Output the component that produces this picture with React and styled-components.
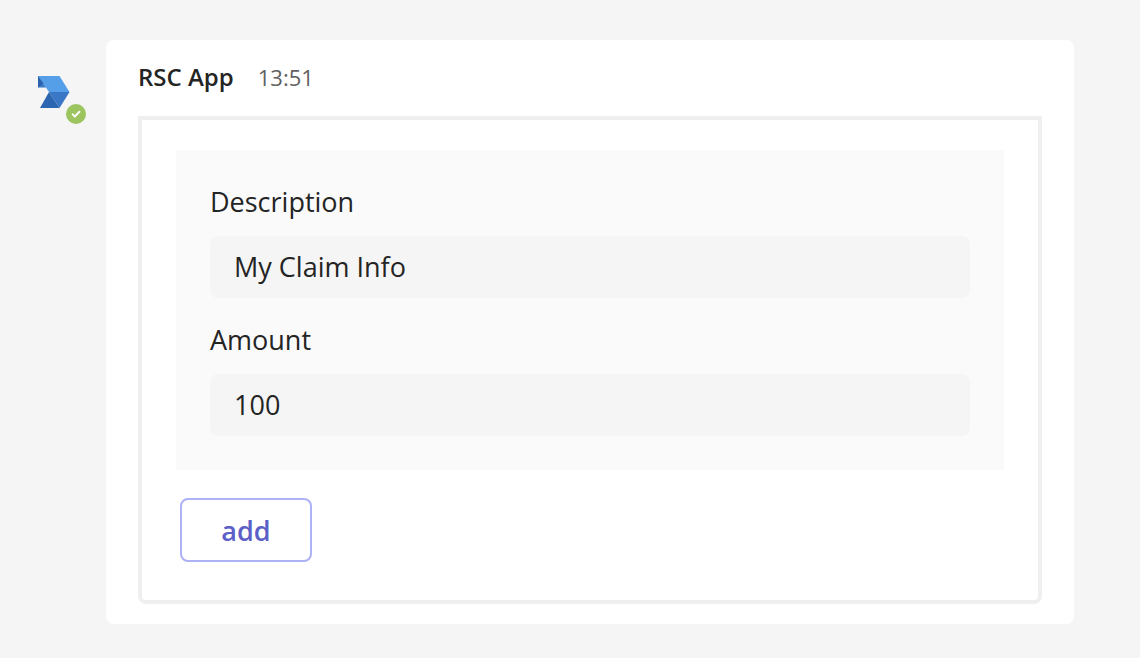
import React from "react";
import styled, { createGlobalStyle } from "styled-components";

const GlobalStyle = createGlobalStyle`
  *, *::before, *::after { box-sizing: border-box; }
  body {
    margin: 0;
    background: #f5f5f5;
    color: #242424;
    font-family: "Segoe UI", "Open Sans", "Noto Sans", sans-serif;
  }
  input, button { font: inherit; color: inherit; }
`;

const Message = styled.main`
  display: flex;
  align-items: flex-start;
  gap: 20px;
  min-height: 100vh;
  padding: 40px 66px 34px 36px;
`;

const Avatar = styled.div`
  position: relative;
  flex: none;
  width: 50px;
  height: 48px;
  margin-top: 36px;

  svg { display: block; }
`;

const Presence = styled.span`
  position: absolute;
  right: 0;
  bottom: 0;
  width: 20px;
  height: 20px;
`;

const Bubble = styled.article`
  flex: 1;
  min-width: 0;
  padding: 0 32px 20px;
  border-radius: 8px;
  background: #fff;
`;

const Header = styled.header`
  display: flex;
  align-items: baseline;
  gap: 24px;
  height: 76px;
  padding-top: 20px;
  line-height: 34px;
`;

const Sender = styled.h1`
  margin: 0;
  font-size: 24px;
  font-weight: 600;
`;

const Time = styled.time`
  color: #616161;
  font-size: 22px;
`;

const Card = styled.form`
  padding: 30px 34px 38px;
  border: 4px solid #efefef;
  border-radius: 0 0 8px 8px;
`;

const Fields = styled.div`
  display: flex;
  flex-direction: column;
  gap: 24px;
  padding: 34px;
  background: #fafafa;
`;

const Field = styled.div`
  display: flex;
  flex-direction: column;
  gap: 16px;
`;

const Label = styled.label`
  font-size: 27px;
  line-height: 36px;
`;

const TextInput = styled.input`
  width: 100%;
  height: 62px;
  padding: 0 24px 2px;
  border: 0;
  border-radius: 8px;
  background: #f5f5f5;
  font-size: 27px;
`;

const Actions = styled.div`
  display: flex;
  padding: 28px 4px 0;
`;

const ActionButton = styled.button`
  min-width: 132px;
  height: 64px;
  padding: 0 24px;
  border: 2px solid #adb1f5;
  border-radius: 8px;
  background: #fff;
  color: #5b5fc7;
  font-size: 27px;
  font-weight: 600;
`;

const AppLogo = () => (
  <svg width="36" height="34" viewBox="0 0 36 34" aria-hidden="true">
    <path d="M2 0h21.500l10 16H13z" fill="#559fe9" />
    <path d="M2 0v11.500h8z" fill="#3a78c8" />
    <path d="M2 0v11.500l5.500-4z" fill="#2a62ad" />
    <path d="M13 16h20.500L23.500 32z" fill="#3976c5" />
    <path d="M13 16l10.500 16H4z" fill="#2c65b0" />
  </svg>
);

const AvailableIcon = () => (
  <svg width="20" height="20" viewBox="0 0 20 20" aria-hidden="true">
    <circle cx="10" cy="10" r="10" fill="#9cc45f" />
    <path
      d="M6.700 10.400l2.100 2.100 4.600-4.700"
      fill="none"
      stroke="#fff"
      strokeWidth="2"
      strokeLinecap="round"
      strokeLinejoin="round"
    />
  </svg>
);

export default function App() {
  return (
    <>
      <GlobalStyle />
      <Message>
        <Avatar>
          <AppLogo />
          <Presence>
            <AvailableIcon />
          </Presence>
        </Avatar>
        <Bubble>
          <Header>
            <Sender>RSC App</Sender>
            <Time>13:51</Time>
          </Header>
          <Card onSubmit={(event) => event.preventDefault()}>
            <Fields>
              <Field>
                <Label htmlFor="description">Description</Label>
                <TextInput id="description" defaultValue="My Claim Info" />
              </Field>
              <Field>
                <Label htmlFor="amount">Amount</Label>
                <TextInput id="amount" inputMode="decimal" defaultValue="100" />
              </Field>
            </Fields>
            <Actions>
              <ActionButton type="submit">add</ActionButton>
            </Actions>
          </Card>
        </Bubble>
      </Message>
    </>
  );
}
